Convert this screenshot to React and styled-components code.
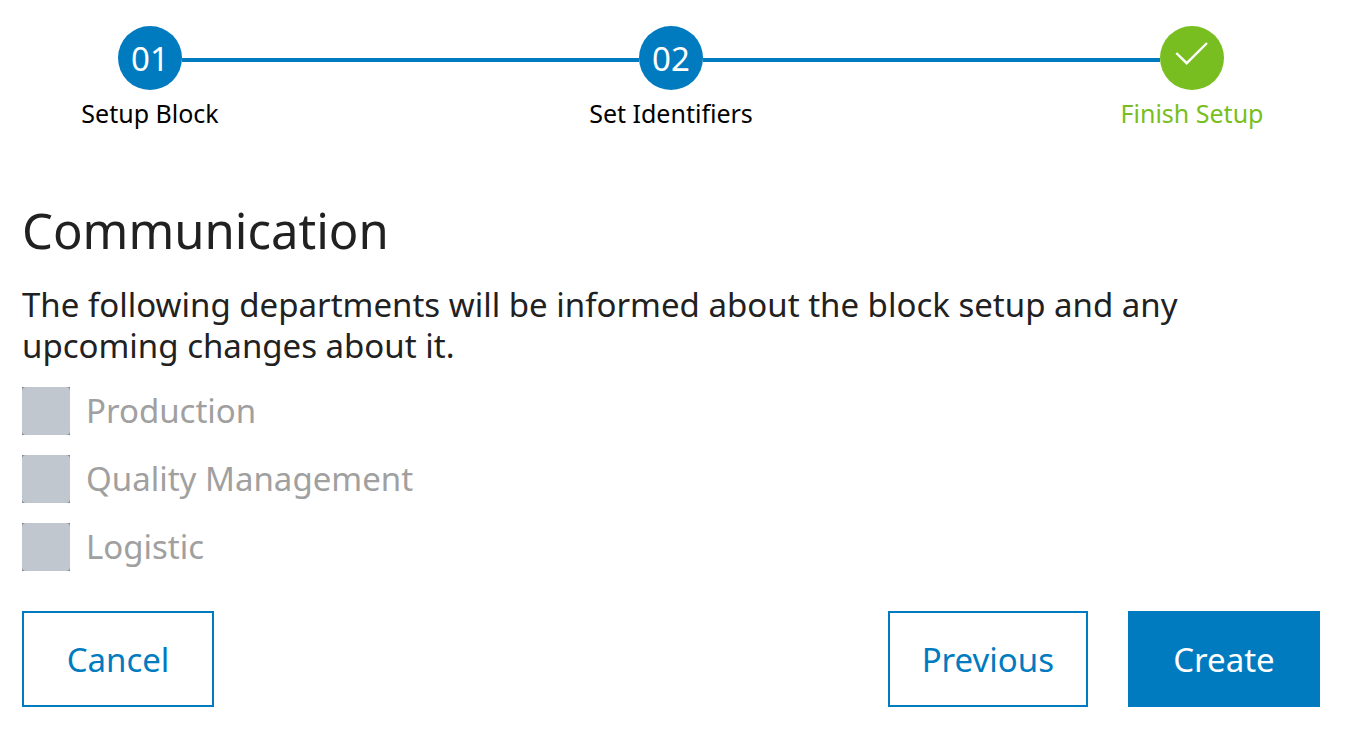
import React, {Fragment} from "react";
import styled, {createGlobalStyle} from "styled-components";

const colors = {
    blue: "#007bc0",
    green: "#78be20",
    text: "#212121",
    disabledText: "#a0a0a0",
    disabledBox: "#c1c7cf",
    disabledEdge: "#7d858f",
}

const GlobalStyle = createGlobalStyle`
    * {
        box-sizing: border-box;
    }

    body {
        margin: 0;
        background: #fff;
        color: ${colors.text};
        font-family: "Noto Sans", "Open Sans", sans-serif;
        font-size: 33px;
        line-height: 41px;
    }
`

const Page = styled.main`
    padding: 26px 25px 24px 22px;
`

const Stepper = styled.ol`
    display: flex;
    margin: 0;
    padding: 0 96px;
    list-style: none;
`

const Step = styled.li`
    display: flex;
    flex: none;
    flex-direction: column;
    align-items: center;
    width: 64px;
    color: ${props => props.$done ? colors.green : "#000"};
`

const StepCircle = styled.span`
    display: flex;
    align-items: center;
    justify-content: center;
    width: 64px;
    height: 64px;
    border-radius: 50%;
    background: ${props => props.$done ? colors.green : colors.blue};
    color: #fff;
`

const StepLabel = styled.span`
    margin-top: 8px;
    font-size: 25px;
    line-height: 30px;
    white-space: nowrap;
`

const StepLine = styled.li`
    flex: 1;
    height: 4px;
    margin-top: 32px;
    background: ${colors.blue};
`

const Title = styled.h1`
    margin: 70px 0 0;
    font-size: 49px;
    font-weight: 400;
    line-height: 64px;
`

const Description = styled.p`
    max-width: 1240px;
    margin: 22px 0 21px;
`

const Departments = styled.div`
    display: flex;
    flex-direction: column;
    align-items: flex-start;
    gap: 20px;
`

const Department = styled.label`
    display: flex;
    gap: 16px;
    color: ${colors.disabledText};
    line-height: 48px;
`

const Checkbox = styled.input.attrs({
    type: "checkbox",
})`
    appearance: none;
    width: 48px;
    height: 48px;
    margin: 0;
    background: ${colors.disabledEdge};

    &::before {
        content: "";
        display: block;
        height: 100%;
        border-radius: 4px;
        background: ${colors.disabledBox};
    }
`

const Actions = styled.div`
    display: flex;
    gap: 40px;
    margin-top: 40px;
`

const Button = styled.button`
    min-width: 192px;
    height: 96px;
    padding: 0 32px;
    border: 2px solid ${colors.blue};
    background: ${props => props.$primary ? colors.blue : "#fff"};
    color: ${props => props.$primary ? "#fff" : colors.blue};
    font: inherit;
`

const CancelButton = styled(Button)`
    margin-right: auto;
`

const CheckIcon = () => (
    <svg width="64" height="64" viewBox="0 0 64 64" fill="none" aria-hidden="true">
        <path d="M16.3 27L26.7 37.2L47 17" stroke="#fff" strokeWidth="2.4"/>
    </svg>
)

const steps = [
    {number: "01", label: "Setup Block"},
    {number: "02", label: "Set Identifiers"},
    {number: "03", label: "Finish Setup", done: true},
]

const departments = ["Production", "Quality Management", "Logistic"]

export default function App() {
    return (
        <Page>
            <GlobalStyle/>
            <Stepper>
                {steps.map((step, index) => (
                    <Fragment key={step.number}>
                        {index > 0 && <StepLine aria-hidden="true"/>}
                        <Step $done={step.done}>
                            <StepCircle $done={step.done}>
                                {step.done ? <CheckIcon/> : step.number}
                            </StepCircle>
                            <StepLabel>{step.label}</StepLabel>
                        </Step>
                    </Fragment>
                ))}
            </Stepper>
            <Title>Communication</Title>
            <Description>
                The following departments will be informed about the block setup and any upcoming changes about it.
            </Description>
            <Departments>
                {departments.map(name => (
                    <Department key={name}>
                        <Checkbox disabled/>
                        {name}
                    </Department>
                ))}
            </Departments>
            <Actions>
                <CancelButton type="button">Cancel</CancelButton>
                <Button type="button">Previous</Button>
                <Button type="button" $primary>Create</Button>
            </Actions>
        </Page>
    );
}
